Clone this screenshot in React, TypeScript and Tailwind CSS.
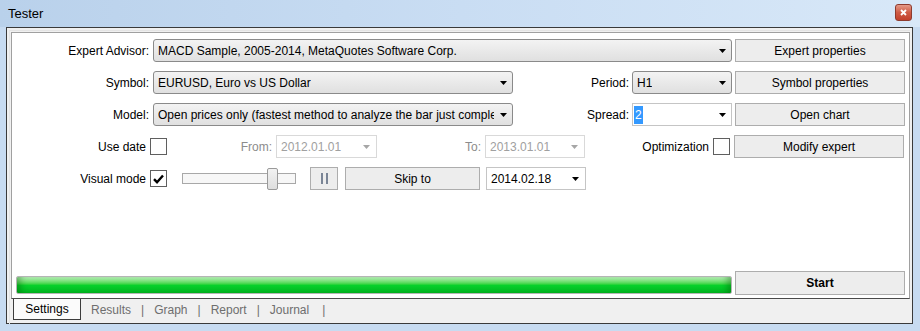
import React from 'react';

function Arrow({ disabled }: { disabled?: boolean }) {
  return (
    <svg width="7" height="4" viewBox="0 0 7 4" className="shrink-0">
      <polygon points="0,0 7,0 3.5,4" fill={disabled ? '#a6a6a6' : '#000'} />
    </svg>
  );
}

// Windows 7 style read-only combo box
function Combo({ width, value }: { width: string; value: string }) {
  return (
    <div
      className={`${width} h-[23px] flex items-center justify-between rounded-[3px] border border-[#8a8a8a] bg-gradient-to-b from-[#f3f3f3] to-[#e0e0e0] pl-[4px] pr-[5px] overflow-hidden`}
    >
      <span className="whitespace-nowrap overflow-hidden">{value}</span>
      <span className="ml-[6px]">
        <Arrow />
      </span>
    </div>
  );
}

function DateBox({ width, value, disabled }: { width: string; value: string; disabled?: boolean }) {
  return (
    <div
      className={`${width} h-[23px] flex items-center justify-between border bg-white pl-[4px] pr-[6px] ${
        disabled ? 'border-[#d9d9d9] text-[#a0a0a0]' : 'border-[#c5c5c5] text-black'
      }`}
    >
      <span>{value}</span>
      <Arrow disabled={disabled} />
    </div>
  );
}

function Button({ width, children, bold }: { width: string; children: React.ReactNode; bold?: boolean }) {
  return (
    <div
      className={`${width} h-[23px] flex items-center justify-center border border-[#adadad] bg-[#ededed] ${
        bold ? 'font-bold' : ''
      }`}
    >
      {children}
    </div>
  );
}

function Check({ checked }: { checked?: boolean }) {
  return (
    <div className="w-[17px] h-[17px] border border-[#5f5f5f] bg-white flex items-center justify-center shrink-0">
      {checked && (
        <svg width="11" height="10" viewBox="0 0 11 10">
          <path d="M1 5.2 L4 8.2 L10 1.5" fill="none" stroke="#000" strokeWidth="2.4" />
        </svg>
      )}
    </div>
  );
}

function Label({ width, children, gray }: { width: string; children: React.ReactNode; gray?: boolean }) {
  return (
    <div className={`${width} text-right whitespace-nowrap shrink-0 ${gray ? 'text-[#8c8c8c]' : ''}`}>{children}</div>
  );
}

export default function App() {
  return (
    <div className="w-[920px] h-[331px] bg-[#c7dbf1] font-['Liberation_Sans',Arial,sans-serif] text-[12px] text-black overflow-hidden">
      {/* title bar */}
      <div className="h-[27px] flex items-center justify-between pl-[8px] pr-[8px] bg-gradient-to-r from-[#b9d1eb] via-[#c9ddf3] to-[#d8e8f8]">
        <span className="text-[13px] text-black">Tester</span>
        <div className="w-[17px] h-[17px] mb-[2px] rounded-[3px] border border-[#8e3b2e] bg-gradient-to-b from-[#e49a88] via-[#cf5b45] to-[#c2402b] flex items-center justify-center">
          <svg width="7" height="7" viewBox="0 0 7 7">
            <path d="M1 1 L6 6 M6 1 L1 6" stroke="#fff" strokeWidth="1.8" />
          </svg>
        </div>
      </div>

      {/* client frame */}
      <div className="ml-[6px] w-[907px] h-[297px] border border-[#3a3a3a] bg-[#f0f0f0] px-[2px] pt-[2px] flex flex-col">
        <div className="border-t border-l border-[#e4e4e4] pl-[1px] pt-[1px] flex flex-col">
          {/* white panel */}
          <div className="h-[267px] bg-white border border-[#a0a0a0] border-b-[#4a4a4a] pt-[6px] pb-[3px] flex flex-col">
            <div className="flex flex-col gap-[9px]">
              {/* row 1 */}
              <div className="flex items-center h-[23px]">
                <Label width="w-[137px]">Expert Advisor:</Label>
                <div className="ml-[4px]">
                  <Combo width="w-[579px]" value="MACD Sample, 2005-2014, MetaQuotes Software Corp." />
                </div>
                <div className="ml-[3px]">
                  <Button width="w-[170px]">Expert properties</Button>
                </div>
              </div>
              {/* row 2 */}
              <div className="flex items-center h-[23px]">
                <Label width="w-[137px]">Symbol:</Label>
                <div className="ml-[4px]">
                  <Combo width="w-[360px]" value="EURUSD, Euro vs US Dollar" />
                </div>
                <Label width="w-[116px]">Period:</Label>
                <div className="ml-[3px]">
                  <Combo width="w-[100px]" value="H1" />
                </div>
                <div className="ml-[3px]">
                  <Button width="w-[170px]">Symbol properties</Button>
                </div>
              </div>
              {/* row 3 */}
              <div className="flex items-center h-[23px]">
                <Label width="w-[137px]">Model:</Label>
                <div className="ml-[4px]">
                  <Combo width="w-[360px]" value="Open prices only (fastest method to analyze the bar just comple" />
                </div>
                <Label width="w-[116px]">Spread:</Label>
                <div className="ml-[3px] w-[100px] h-[23px] flex items-center justify-between border border-[#c5c5c5] bg-white pl-[1px] pr-[5px]">
                  <span className="bg-[#3399ff] text-white px-[1px] leading-[18px]">2</span>
                  <Arrow />
                </div>
                <div className="ml-[3px]">
                  <Button width="w-[170px]">Open chart</Button>
                </div>
              </div>
              {/* row 4 */}
              <div className="flex items-center h-[23px]">
                <Label width="w-[134px]">Use date</Label>
                <div className="ml-[4px]">
                  <Check />
                </div>
                <Label width="w-[105px]" gray>
                  From:
                </Label>
                <div className="ml-[4px]">
                  <DateBox width="w-[101px]" value="2012.01.01" disabled />
                </div>
                <Label width="w-[104px]" gray>
                  To:
                </Label>
                <div className="ml-[4px]">
                  <DateBox width="w-[100px]" value="2013.01.01" disabled />
                </div>
                <Label width="w-[124px]">Optimization</Label>
                <div className="ml-[4px]">
                  <Check />
                </div>
                <div className="ml-[4px]">
                  <Button width="w-[170px]">Modify expert</Button>
                </div>
              </div>
              {/* row 5 */}
              <div className="flex items-center h-[23px]">
                <Label width="w-[134px]">Visual mode</Label>
                <div className="ml-[4px]">
                  <Check checked />
                </div>
                <div className="ml-[15px] relative w-[114px] h-[11px] border border-[#a8a8a8] bg-[#f7f7f7]">
                  <div className="absolute left-[84px] top-[-6px] w-[11px] h-[22px] border border-[#9a9a9a] rounded-[2px] bg-gradient-to-b from-[#f2f2f2] to-[#dedede]" />
                </div>
                <div className="ml-[14px] w-[28px] h-[23px] border border-[#adadad] bg-[#ededed] flex items-center justify-center gap-[3px]">
                  <div className="w-[2px] h-[11px] bg-[#7a8596]" />
                  <div className="w-[2px] h-[11px] bg-[#7a8596]" />
                </div>
                <div className="ml-[7px]">
                  <Button width="w-[135px]">Skip to</Button>
                </div>
                <div className="ml-[6px]">
                  <DateBox width="w-[100px]" value="2014.02.18" />
                </div>
              </div>
            </div>

            {/* progress + start */}
            <div className="mt-auto flex items-end">
              <div className="ml-[4px] w-[716px] h-[18px] mb-[1px] rounded-[2px] border border-[#b5b5b5] bg-gradient-to-b from-[#b8f0b8] via-[#08d22c] to-[#00b51f] shadow-[inset_8px_0_6px_-4px_rgba(0,80,0,0.35),inset_-8px_0_6px_-4px_rgba(0,80,0,0.35)]" />
              <div className="ml-[3px]">
                <Button width="w-[170px] !h-[24px]" bold>
                  Start
                </Button>
              </div>
            </div>
          </div>

          {/* tabs */}
          <div className="h-[25px] flex items-start pl-[2px]">
            <div className="h-[21px] w-[68px] bg-[#fbfbfb] border-l border-r border-b border-[#3c3c3c] flex items-center justify-center">
              Settings
            </div>
            <div className="h-[21px] flex items-center text-[#6e6e6e] pl-[10px]">
              <span>Results</span>
              <span className="mx-[10px]">|</span>
              <span>Graph</span>
              <span className="mx-[10px]">|</span>
              <span>Report</span>
              <span className="mx-[10px]">|</span>
              <span>Journal</span>
              <span className="ml-[13px]">|</span>
            </div>
          </div>
        </div>
      </div>
    </div>
  );
}
